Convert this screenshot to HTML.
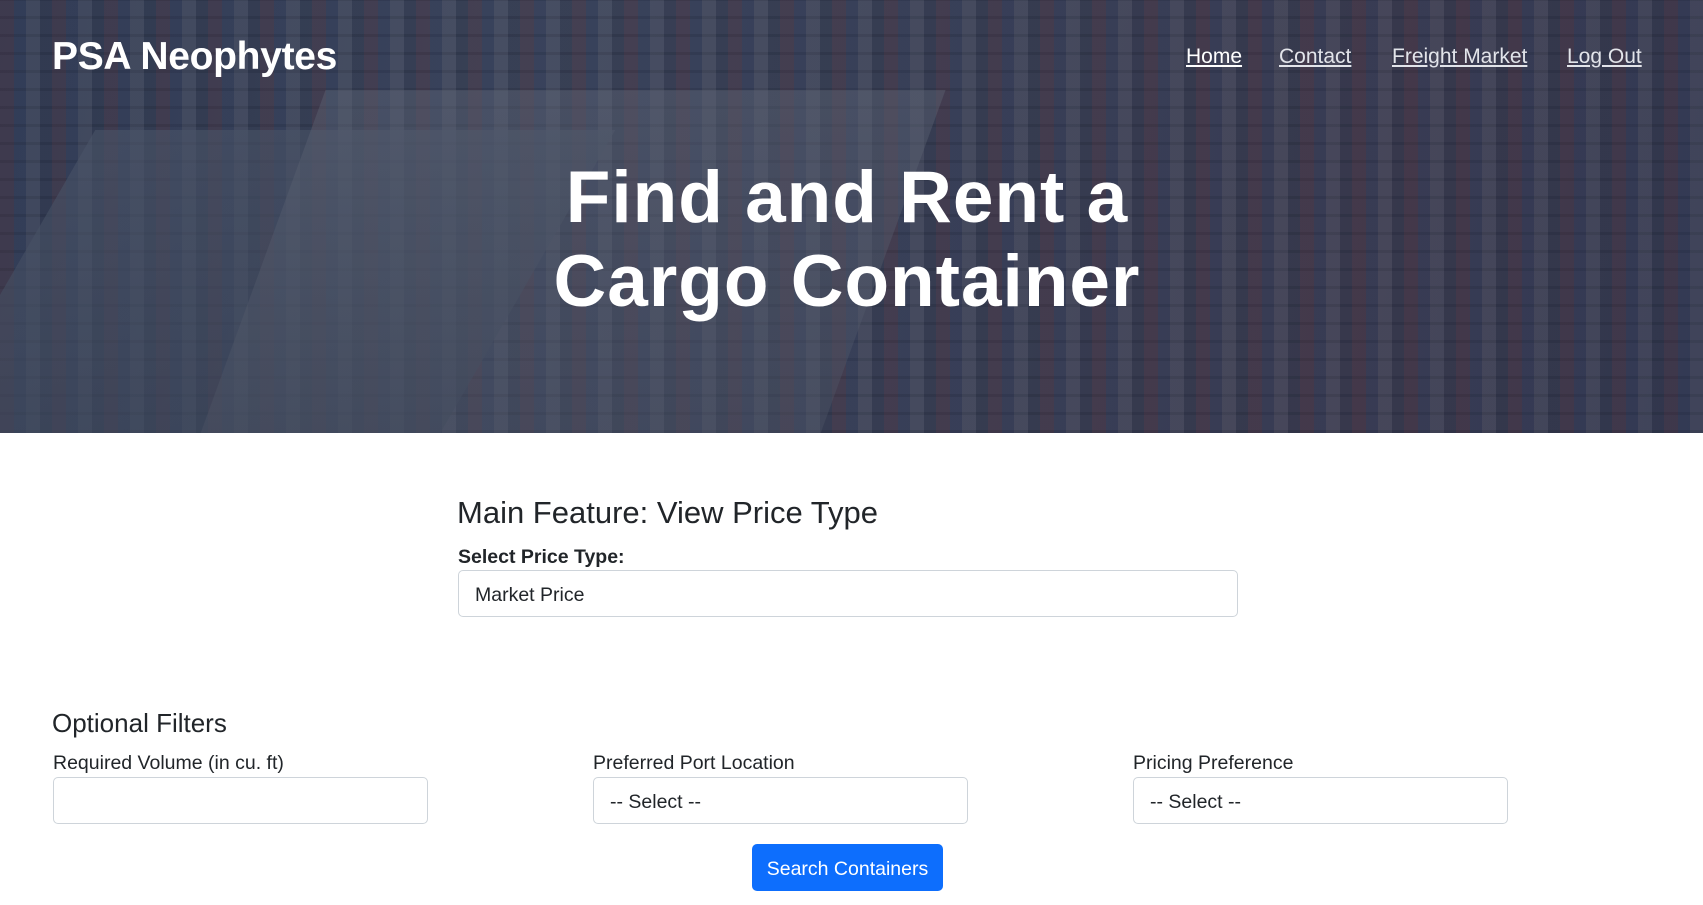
<!DOCTYPE html>
<html><head><meta charset="utf-8"><style>
*{box-sizing:border-box;margin:0;padding:0}
body{width:1703px;height:905px;overflow:hidden;background:#fff;font-family:"Liberation Sans",sans-serif;color:#212529;position:relative}
.hero{position:absolute;left:0;top:0;width:1703px;height:433px;overflow:hidden;
background:
linear-gradient(rgba(30,40,65,.5),rgba(30,40,65,.5)),
repeating-linear-gradient(90deg,rgba(150,60,60,.25) 0 14px,rgba(60,80,130,.25) 14px 26px,rgba(200,200,210,.18) 26px 40px,rgba(40,50,70,.2) 40px 52px),
repeating-linear-gradient(0deg,rgba(0,0,0,.18) 0 3px,transparent 3px 18px),
linear-gradient(100deg,#4a5266 0%,#5c6172 30%,#585868 55%,#5a4e5c 80%,#4b4a5e 100%)}
.hero:before{content:"";position:absolute;left:0;top:130px;width:520px;height:330px;background:linear-gradient(160deg,#4a5468,#3b4558);transform:skewX(-30deg);opacity:.6}
.hero:after{content:"";position:absolute;left:260px;top:90px;width:620px;height:360px;background:linear-gradient(#5f6676,#4c5364);opacity:.4;transform:skewX(-20deg)}
.brand{position:absolute;left:52px;top:35px;font-size:39px;font-weight:bold;color:#fff;z-index:2;letter-spacing:-.3px}
.nav{position:absolute;top:45px;font-size:21px;color:#e2e4ea;text-decoration:underline;z-index:2}
.title{position:absolute;left:0;width:1694px;top:156px;text-align:center;color:#fff;font-size:73px;line-height:84px;font-weight:bold;z-index:2;letter-spacing:1px}
h3{position:absolute;left:457px;top:495px;font-size:31px;font-weight:normal}
.lbl{position:absolute;font-size:19.5px}
.inp{position:absolute;border:1px solid #ced4da;border-radius:5px;background:#fff;font-size:19.5px;padding-left:16px;padding-top:3px;display:flex;align-items:center}
.btn{position:absolute;left:752px;top:844px;width:191px;height:47px;background:#0d6efd;color:#fff;border-radius:5px;font-size:19.5px;padding-top:3px;display:flex;align-items:center;justify-content:center}
</style></head><body>
<div class="hero">
<div class="brand">PSA Neophytes</div>
<div class="nav" style="left:1186px;color:#fff">Home</div>
<div class="nav" style="left:1279px">Contact</div>
<div class="nav" style="left:1392px">Freight Market</div>
<div class="nav" style="left:1567px">Log Out</div>
<div class="title">Find and Rent a<br>Cargo Container</div>
</div>
<h3>Main Feature: View Price Type</h3>
<div class="lbl" style="left:458px;top:546px;font-weight:bold">Select Price Type:</div>
<div class="inp" style="left:458px;top:570px;width:780px;height:47px">Market Price</div>
<div class="lbl" style="left:52px;top:708px;font-size:26px">Optional Filters</div>
<div class="lbl" style="left:53px;top:752px">Required Volume (in cu. ft)</div>
<div class="lbl" style="left:593px;top:752px">Preferred Port Location</div>
<div class="lbl" style="left:1133px;top:752px">Pricing Preference</div>
<div class="inp" style="left:53px;top:777px;width:375px;height:47px"></div>
<div class="inp" style="left:593px;top:777px;width:375px;height:47px">-- Select --</div>
<div class="inp" style="left:1133px;top:777px;width:375px;height:47px">-- Select --</div>
<div class="btn">Search Containers</div>
</body></html>
